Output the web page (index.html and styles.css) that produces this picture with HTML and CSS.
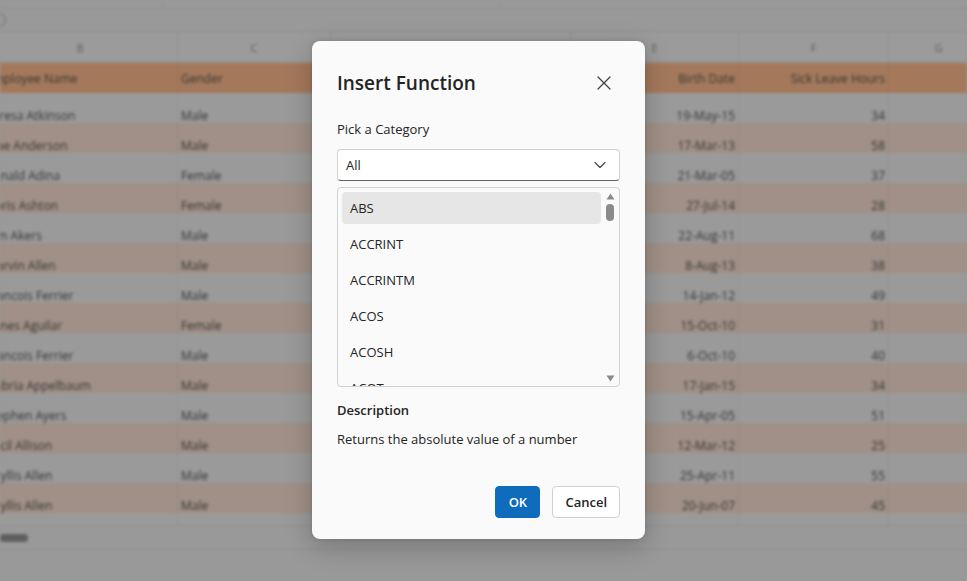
FILE: index.html
```html
<!DOCTYPE html>
<html lang="en">
<head>
<meta charset="utf-8">
<title>Insert Function</title>
<link rel="stylesheet" href="styles.css">
</head>
<body>
<div class="app">
  <div class="sheet">
    <div class="toolbar"><span class="tb-sep"></span><span class="tb-sep"></span></div>
    <div class="formula"><span class="fx-icon"></span></div>
    <div class="grid colheads">
      <div class="ch">B</div><div class="ch">C</div><div class="ch">D</div><div class="ch">E</div><div class="ch">F</div><div class="ch">G</div>
    </div>
    <div class="grid hrow">
      <div class="c">Employee Name</div><div class="c">Gender</div><div class="c"></div><div class="c r">Birth Date</div><div class="c r">Sick Leave Hours</div><div class="c"></div>
    </div>
    <div class="grid row"><div class="c">Teresa Atkinson</div><div class="c">Male</div><div class="c"></div><div class="c r">19-May-15</div><div class="c r">34</div><div class="c"></div></div>
    <div class="grid row alt"><div class="c">Mae Anderson</div><div class="c">Male</div><div class="c"></div><div class="c r">17-Mar-13</div><div class="c r">58</div><div class="c"></div></div>
    <div class="grid row"><div class="c">Ronald Adina</div><div class="c">Female</div><div class="c"></div><div class="c r">21-Mar-05</div><div class="c r">37</div><div class="c"></div></div>
    <div class="grid row alt"><div class="c">Doris Ashton</div><div class="c">Female</div><div class="c"></div><div class="c r">27-Jul-14</div><div class="c r">28</div><div class="c"></div></div>
    <div class="grid row"><div class="c">Kim Akers</div><div class="c">Male</div><div class="c"></div><div class="c r">22-Aug-11</div><div class="c r">68</div><div class="c"></div></div>
    <div class="grid row alt"><div class="c">Marvin Allen</div><div class="c">Male</div><div class="c"></div><div class="c r">8-Aug-13</div><div class="c r">38</div><div class="c"></div></div>
    <div class="grid row"><div class="c">Francois Ferrier</div><div class="c">Male</div><div class="c"></div><div class="c r">14-Jan-12</div><div class="c r">49</div><div class="c"></div></div>
    <div class="grid row alt"><div class="c">Agnes Aguilar</div><div class="c">Female</div><div class="c"></div><div class="c r">15-Oct-10</div><div class="c r">31</div><div class="c"></div></div>
    <div class="grid row"><div class="c">Francois Ferrier</div><div class="c">Male</div><div class="c"></div><div class="c r">6-Oct-10</div><div class="c r">40</div><div class="c"></div></div>
    <div class="grid row alt"><div class="c">Gabria Appelbaum</div><div class="c">Male</div><div class="c"></div><div class="c r">17-Jan-15</div><div class="c r">34</div><div class="c"></div></div>
    <div class="grid row"><div class="c">Stephen Ayers</div><div class="c">Male</div><div class="c"></div><div class="c r">15-Apr-05</div><div class="c r">51</div><div class="c"></div></div>
    <div class="grid row alt"><div class="c">Cecil Allison</div><div class="c">Male</div><div class="c"></div><div class="c r">12-Mar-12</div><div class="c r">25</div><div class="c"></div></div>
    <div class="grid row"><div class="c">Phyllis Allen</div><div class="c">Male</div><div class="c"></div><div class="c r">25-Apr-11</div><div class="c r">55</div><div class="c"></div></div>
    <div class="grid row alt"><div class="c">Phyllis Allen</div><div class="c">Male</div><div class="c"></div><div class="c r">20-Jun-07</div><div class="c r">45</div><div class="c"></div></div>
    <div class="grid row empty"><div class="c"></div><div class="c"></div><div class="c"></div><div class="c"></div><div class="c"></div><div class="c"></div></div>
    <div class="hscroll"><span class="hthumb"></span></div>
  </div>

  <div class="backdrop">
    <div class="dialog" role="dialog">
      <div class="dlg-head">
        <h1 class="dlg-title">Insert Function</h1>
        <span class="close" aria-label="Close">
          <svg width="14" height="14" viewBox="0 0 14 14"><path d="M1 1 L13 13 M13 1 L1 13" stroke="#424242" stroke-width="1.3" fill="none" stroke-linecap="round"/></svg>
        </span>
      </div>
      <div class="label">Pick a Category</div>
      <div class="select">
        <span>All</span>
        <svg width="12" height="12" viewBox="0 0 12 12"><path d="M1 3.5 L6 8.5 L11 3.5" stroke="#424242" stroke-width="1.1" fill="none" stroke-linecap="round" stroke-linejoin="round"/></svg>
      </div>
      <div class="listbox">
        <ul class="list">
          <li class="item sel">ABS</li>
          <li class="item">ACCRINT</li>
          <li class="item">ACCRINTM</li>
          <li class="item">ACOS</li>
          <li class="item">ACOSH</li>
          <li class="item">ACOT</li>
          <li class="item">ACOTH</li>
        </ul>
        <div class="vscroll">
          <svg class="arr" width="9" height="7" viewBox="0 0 9 7"><path d="M4.5 0.5 L8.5 6.5 L0.5 6.5 Z" fill="#8a8a8a"/></svg>
          <span class="vthumb"></span>
          <span class="vspace"></span>
          <svg class="arr" width="9" height="7" viewBox="0 0 9 7"><path d="M0.5 0.5 L8.5 0.5 L4.5 6.5 Z" fill="#8a8a8a"/></svg>
        </div>
      </div>
      <div class="desc-title">Description</div>
      <div class="desc">Returns the absolute value of a number</div>
      <div class="actions">
        <button class="btn primary">OK</button>
        <button class="btn">Cancel</button>
      </div>
    </div>
  </div>
</div>
</body>
</html>
```

FILE: styles.css
```css
* { box-sizing: border-box; }
html, body { margin: 0; padding: 0; }
body {
  width: 967px;
  height: 581px;
  overflow: hidden;
  background: #999999;
  font-family: "Open Sans", "Noto Sans", sans-serif;
}
.app {
  position: relative;
  width: 967px;
  height: 581px;
  overflow: hidden;
}

/* ---------- blurred spreadsheet ---------- */
.sheet {
  width: 967px;
  height: 581px;
  background: #999999;
  filter: blur(1.4px);
  color: #343434;
  font-size: 12px;
  overflow: hidden;
}
.toolbar {
  height: 9px;
  border-bottom: 1px solid #8f8f8f;
  display: flex;
}
.tb-sep { width: 163px; border-right: 1px solid #909090; }
.tb-sep + .tb-sep { width: 337px; }
.formula {
  height: 23px;
  border-bottom: 1px solid #8f8f8f;
  display: flex;
  align-items: center;
}
.fx-icon {
  width: 14px; height: 14px;
  margin-left: -8px;
  border: 1.5px solid #6f6f6f;
  border-radius: 50%;
}
.grid {
  display: grid;
  grid-template-columns: 195px 153px 240px 168px 150px 100px;
  margin-left: -17px;
}
.c {
  padding: 0 3px;
  white-space: nowrap;
  overflow: hidden;
  border-right: 1px solid #939393;
  display: flex;
  align-items: flex-end;
  padding-bottom: 2px;
}
.c.r { justify-content: flex-end; }
.colheads { height: 31px; background: #9b9b9b; border-bottom: 1px solid #8e8e8e; }
.ch {
  display: flex; align-items: center; justify-content: center;
  color: #5d5d5d; font-size: 11px;
  border-right: 1px solid #909090;
}
.hrow { height: 30px; background: #a4795b; }
.hrow .c { border-right-color: #9b7155; padding-bottom: 6px; }
.row { height: 30px; background: #9a9a9a; }
.row .c { padding-bottom: 0px; align-items: center; padding-top: 14px; }
.row.alt { background: #a09087; }
.row.alt .c { border-right-color: #998a81; }
.row.empty { height: 12px; }
.row.empty .c { padding: 0; }
.hscroll {
  height: 25px;
  border-top: 1px solid #8f8f8f;
  border-bottom: 1px solid #8f8f8f;
  display: flex;
  align-items: center;
}
.hthumb {
  width: 28px; height: 8px; border-radius: 4px;
  background: #5e5e5e;
}

/* ---------- dialog ---------- */
.backdrop {
  position: absolute;
  inset: 0;
  display: flex;
  align-items: flex-start;
  justify-content: center;
  padding: 41px 10px 0 0;
}
.dialog {
  width: 333px;
  height: 498px;
  background: #fafafa;
  border-radius: 8px;
  box-shadow: 0 8px 28px rgba(0,0,0,0.22), 0 0 4px rgba(0,0,0,0.12);
  padding: 28px 25px 21px 25px;
  display: flex;
  flex-direction: column;
  color: #242424;
  font-family: "Open Sans", "Noto Sans", sans-serif;
}
.dlg-head {
  display: flex;
  align-items: center;
  justify-content: space-between;
  height: 28px;
}
.dlg-title {
  margin: 0;
  font-size: 19px;
  font-weight: 600;
  line-height: 28px;
  color: #242424;
}
.close {
  display: flex;
  margin-right: 9px;
}
.label {
  margin-top: 22px;
  font-size: 13px;
  line-height: 20px;
}
.select {
  margin-top: 10px;
  height: 32px;
  background: #ffffff;
  border: 1px solid #d1d1d1;
  border-bottom-color: #616161;
  border-radius: 4px;
  display: flex;
  align-items: center;
  justify-content: space-between;
  padding: 0 13px 0 8px;
  font-size: 13px;
}
.listbox {
  margin-top: 6px;
  height: 200px;
  border: 1px solid #d1d1d1;
  border-radius: 4px;
  background: #fafafa;
  display: flex;
  overflow: hidden;
}
.list {
  list-style: none;
  margin: 0;
  padding: 4px 0 0 4px;
  flex: 1;
  display: flex;
  flex-direction: column;
  gap: 4px;
  overflow: hidden;
}
.item {
  flex: none;
  height: 32px;
  line-height: 32px;
  padding-left: 8px;
  font-size: 13px;
  border-radius: 4px;
  color: #242424;
}
.item.sel { background: #e6e6e6; }
.vscroll {
  width: 18px;
  display: flex;
  flex-direction: column;
  align-items: center;
  padding: 5px 0 4px 0;
}
.vthumb {
  margin-top: 4px;
  width: 8px;
  height: 17px;
  border-radius: 4px;
  background: #8a8a8a;
}
.vspace { flex: 1; }
.desc-title {
  margin-top: 13px;
  font-size: 13px;
  font-weight: 600;
  line-height: 20px;
}
.desc {
  margin-top: 9px;
  font-size: 13px;
  line-height: 20px;
}
.actions {
  margin-top: auto;
  display: flex;
  justify-content: flex-end;
  gap: 12px;
}
.btn {
  height: 32px;
  min-width: 45px;
  padding: 0 12px;
  border-radius: 4px;
  border: 1px solid #d1d1d1;
  background: #ffffff;
  color: #242424;
  font-family: "Open Sans", "Noto Sans", sans-serif;
  font-size: 13px;
  font-weight: 600;
}
.btn.primary {
  background: #0f6cbd;
  border-color: #0f6cbd;
  color: #ffffff;
}
```
